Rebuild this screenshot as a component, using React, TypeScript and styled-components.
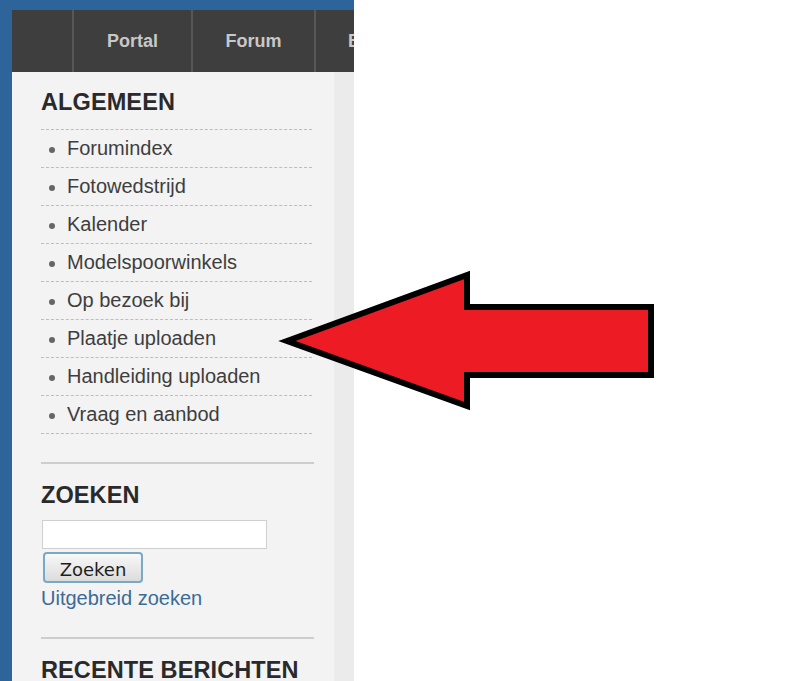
import * as React from 'react';
import styled, { createGlobalStyle } from 'styled-components';

const GlobalStyle = createGlobalStyle`
  html, body {
    margin: 0;
    padding: 0;
    background: #ffffff;
  }
  body {
    position: relative;
    width: 800px;
    height: 681px;
    overflow: hidden;
    font-family: "Liberation Sans", Arial, sans-serif;
  }
`;

const Frame = styled.div`
  width: 342px;
  height: 671px;
  padding: 10px 0 0 12px;
  background: #2d659b;
  overflow: hidden;
  display: flex;
  flex-direction: column;
`;

const NavBar = styled.nav`
  display: flex;
  height: 62px;
  flex-shrink: 0;
  background: #3e3e3e;
  overflow: hidden;
  white-space: nowrap;
`;

const NavItem = styled.div<{ $width: number; $first?: boolean }>`
  display: flex;
  align-items: center;
  justify-content: center;
  flex: 0 0 ${(p) => p.$width}px;
  border-left: ${(p) => (p.$first ? 'none' : '2px solid #575757')};
  color: #c8c8c8;
  font-size: 18px;
  font-weight: bold;
`;

const NavTail = styled(NavItem)`
  justify-content: flex-start;
  padding-left: 32px;
`;

const Body = styled.div`
  display: flex;
  flex: 1;
`;

const Sidebar = styled.aside`
  width: 322px;
  padding: 16px 20px 0 29px;
  box-sizing: border-box;
  background: #f3f3f3;
`;

const Edge = styled.div`
  flex: 1;
  background: #ebebeb;
`;

const Section = styled.section<{ $divided?: boolean }>`
  border-top: ${(p) => (p.$divided ? '2px solid #cdcdcd' : 'none')};
  padding-top: ${(p) => (p.$divided ? '17px' : '0')};
  padding-bottom: 28px;
`;

const Heading = styled.h2`
  margin: 0;
  font-size: 23.5px;
  line-height: 28px;
  font-weight: bold;
  color: #2a2a2a;
  letter-spacing: 0.1px;
`;

const LinkList = styled.ul`
  list-style: none;
  margin: 13px 2px 0 0;
  padding: 0;
  border-top: 1px dashed #bdbdbd;
`;

const LinkItem = styled.li`
  display: flex;
  align-items: center;
  height: 37px;
  border-bottom: 1px dashed #bdbdbd;
  font-size: 20px;
  color: #3e3e3e;
`;

const Bullet = styled.span`
  width: 6px;
  height: 6px;
  margin: 3px 12px 0 8px;
  border-radius: 50%;
  background: #666666;
`;

const SearchInput = styled.input`
  display: block;
  width: 225px;
  height: 29px;
  margin: 11px 0 0 1px;
  box-sizing: border-box;
  border: 1px solid #cfcfcf;
  background: #ffffff;
`;

const SearchButton = styled.button`
  display: block;
  width: 100px;
  height: 31px;
  margin: 3px 0 0 2px;
  padding: 3px 0 0;
  box-sizing: border-box;
  border: 2px solid #78a9c7;
  border-radius: 4px;
  background: linear-gradient(#f8f8f8, #dcdcdc);
  font-family: "DejaVu Sans", Verdana, sans-serif;
  font-size: 18px;
  color: #1e1e1e;
`;

const SearchLink = styled.a`
  display: block;
  margin-top: 4px;
  font-size: 20px;
  line-height: 22px;
  color: #3b6b97;
  text-decoration: none;
`;

const ArrowLayer = styled.svg`
  position: absolute;
  top: 0;
  left: 0;
  width: 800px;
  height: 681px;
  pointer-events: none;
`;

const links = [
  'Forumindex',
  'Fotowedstrijd',
  'Kalender',
  'Modelspoorwinkels',
  'Op bezoek bij',
  'Plaatje uploaden',
  'Handleiding uploaden',
  'Vraag en aanbod',
];

export default function App() {
  return (
    <>
      <GlobalStyle />
      <Frame>
        <NavBar>
          <NavItem $width={60} $first />
          <NavItem $width={117}>Portal</NavItem>
          <NavItem $width={121}>Forum</NavItem>
          <NavTail $width={120}>Blog</NavTail>
        </NavBar>
        <Body>
          <Sidebar>
            <Section>
              <Heading>ALGEMEEN</Heading>
              <LinkList>
                {links.map((label) => (
                  <LinkItem key={label}>
                    <Bullet />
                    {label}
                  </LinkItem>
                ))}
              </LinkList>
            </Section>
            <Section $divided>
              <Heading>ZOEKEN</Heading>
              <SearchInput type="text" />
              <SearchButton type="button">Zoeken</SearchButton>
              <SearchLink>Uitgebreid zoeken</SearchLink>
            </Section>
            <Section $divided>
              <Heading>RECENTE BERICHTEN</Heading>
            </Section>
          </Sidebar>
          <Edge />
        </Body>
      </Frame>
      <ArrowLayer viewBox="0 0 800 681">
        <polygon
          points="287,341 467,275 467,307 651,307 651,375 467,375 467,406"
          fill="#ed1c24"
          stroke="#000000"
          strokeWidth={6}
          strokeLinejoin="miter"
        />
      </ArrowLayer>
    </>
  );
}
